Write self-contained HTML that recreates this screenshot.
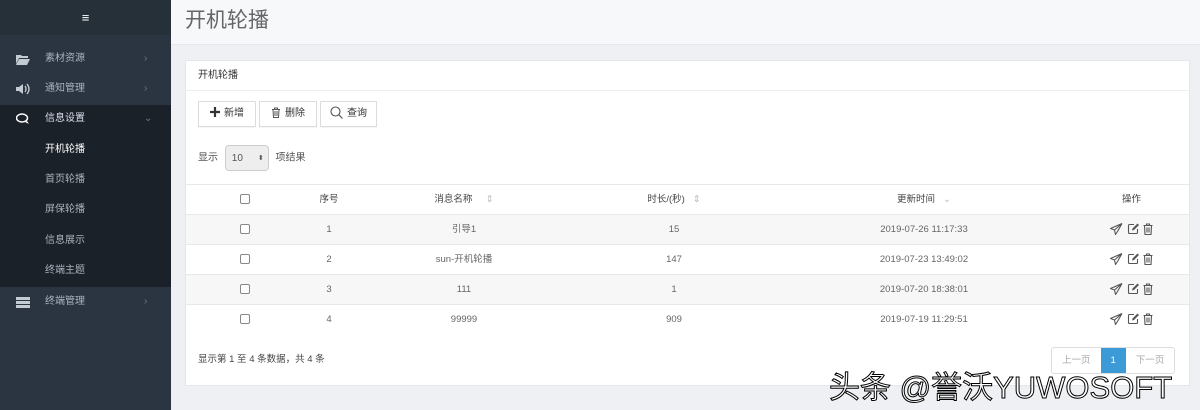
<!DOCTYPE html>
<html><head><meta charset="utf-8"><style>
*{box-sizing:border-box;margin:0;padding:0}
body{width:1200px;height:410px;overflow:hidden;background:#eef0f3;font-family:"Liberation Sans","Noto Sans CJK SC",sans-serif;position:relative}
.side{position:absolute;left:0;top:0;width:171px;height:410px;background:#2b3542}
.top{height:35px;background:#263039;color:#fff;text-align:center;line-height:35px;font-size:13px}
.mi{position:absolute;left:0;width:171px;height:30px;line-height:30px;font-size:10px;color:#aab2bc}
.mi .t{position:absolute;left:45px}
.mi .ic{position:absolute;left:16px;top:9px;width:14px;height:12px}
.mi .ar{position:absolute;left:144px;color:#6e7884}
.sub{position:absolute;left:0;top:105px;width:171px;height:182px;background:#1b2129}
.hdr{position:absolute;left:171px;top:0;width:1029px;height:45px;background:#f7f8f9;border-bottom:1px solid #e6e8eb;font-size:21px;color:#666;line-height:42px;padding-left:14px}
.panel{position:absolute;left:185px;top:60px;width:1005px;height:326px;background:#fff;border:1px solid #e4e6e9}
.ph{height:30px;line-height:30px;font-size:10px;color:#333;padding-left:12px;border-bottom:1px solid #eceef0}
.tb{height:46px;background:#fff;position:relative}
.btn{position:absolute;top:10px;height:26px;border:1px solid #dcdcdc;background:#fff;font-size:10px;color:#333;line-height:24px;text-align:center;box-shadow:0 1px 1px rgba(0,0,0,.05)}
.btn svg{vertical-align:middle;margin-right:4px;margin-top:-2px}
.sh{position:absolute;top:84px;left:12px;font-size:10px;color:#555;line-height:26px}
.sel{display:inline-block;width:44px;height:26px;border:1px solid #ccc;border-radius:4px;background:#eee;vertical-align:middle;margin:0 4px;padding-left:6px;position:relative}
table{position:absolute;top:123px;left:0;width:1003px;border-collapse:collapse;font-size:9.5px;color:#666}
td,th{height:30px;text-align:center;font-weight:normal;border-top:1px solid #e8e8e8;vertical-align:middle;line-height:12px}
th{color:#444}
tr:nth-child(even) td{background:#f7f7f7}
.cb{display:inline-block;width:10px;height:10px;border:1px solid #888;border-radius:2px;background:#fff;vertical-align:middle}
td svg{vertical-align:middle;margin:0 2px}
.foot{position:absolute;top:290px;left:12px;font-size:9.5px;color:#444}
.pg{position:absolute;top:286px;left:865px;height:27px;border:1px solid #ddd;display:flex;font-size:9.5px;color:#aaa;line-height:25px;border-radius:3px;overflow:hidden}
.wm{position:absolute;left:829px;top:362px;font-size:31px;color:#fff;-webkit-text-stroke:1px #000;font-family:"Liberation Sans","Noto Sans CJK SC",sans-serif}
</style></head><body>
<div class="side">
<div class="top">≡</div>
<div class="sub"></div>
<div class="mi" style="top:44px"><svg class="ic" viewBox="0 0 14 12"><path d="M0 2h5l1 1h6v2H3L0 11z M3 6h11l-3 6H0z" fill="#c4cad2"/></svg><span class="t">素材资源</span><span class="ar">›</span></div>
<div class="mi" style="top:74px"><svg class="ic" viewBox="0 0 14 12"><path d="M0 4h3l4-3v10L3 8H0z" fill="#c4cad2"/><path d="M9 3q2 3 0 6M11 1q4 5 0 10" stroke="#c4cad2" fill="none" stroke-width="1.3"/></svg><span class="t">通知管理</span><span class="ar">›</span></div>
<div class="mi" style="top:104px;color:#dde"><svg class="ic" viewBox="0 0 14 12"><ellipse cx="6" cy="5" rx="5.5" ry="4" stroke="#fff" fill="none" stroke-width="1.5"/><path d="M9 9l4 2-2-3" fill="#fff"/></svg><span class="t">信息设置</span><span class="ar">⌄</span></div>
<div class="mi" style="top:135px;color:#fff"><span class="t">开机轮播</span></div>
<div class="mi" style="top:165px"><span class="t">首页轮播</span></div>
<div class="mi" style="top:195px"><span class="t">屏保轮播</span></div>
<div class="mi" style="top:226px"><span class="t">信息展示</span></div>
<div class="mi" style="top:256px"><span class="t">终端主题</span></div>
<div class="mi" style="top:287px"><svg class="ic" viewBox="0 0 14 12"><rect x="0" y="1" width="14" height="3" fill="#c4cad2"/><rect x="0" y="5" width="14" height="3" fill="#c4cad2"/><rect x="0" y="9" width="14" height="3" fill="#c4cad2"/></svg><span class="t">终端管理</span><span class="ar">›</span></div>
</div>
<div class="hdr">开机轮播</div>
<div class="panel">
<div class="ph">开机轮播</div>
<div class="tb">
<div class="btn" style="left:12px;width:58px"><svg width="10" height="10" viewBox="0 0 10 10"><path d="M5 0v10M0 5h10" stroke="#333" stroke-width="2.2"/></svg>新增</div>
<div class="btn" style="left:73px;width:58px"><svg width="10" height="11" viewBox="0 0 10 11"><path d="M1 2.5h8M3.5 2.5V1h3v1.5M2 2.5l.5 8h5l.5-8M4 4v5M6 4v5" stroke="#555" fill="none" stroke-width="1"/></svg>删除</div>
<div class="btn" style="left:134px;width:57px"><svg width="13" height="13" viewBox="0 0 13 13"><circle cx="5.5" cy="5.5" r="4.5" stroke="#555" fill="none" stroke-width="1.1"/><path d="M9 9l3.5 3.5" stroke="#555" stroke-width="1.2"/></svg>查询</div>
</div>
<div class="sh">显示 <span class="sel">10 <span style="position:absolute;right:4px;font-size:7px">⬍</span></span> 项结果</div>
<table>
<tr><th style="width:118px"><span class="cb"></span></th><th style="width:50px">序号</th><th style="width:220px">消息名称 &nbsp;&nbsp;&nbsp;&nbsp;<span style="color:#bbb">⇕</span></th><th style="width:200px">时长/(秒) &nbsp;&nbsp;<span style="color:#bbb">⇕</span></th><th style="width:300px">更新时间 &nbsp;&nbsp;<span style="color:#bbb">⌄</span></th><th>操作</th></tr>
<tr><td><span class="cb"></span></td><td>1</td><td>引导1</td><td>15</td><td>2019-07-26 11:17:33</td><td class="ops"></td></tr>
<tr><td><span class="cb"></span></td><td>2</td><td>sun-开机轮播</td><td>147</td><td>2019-07-23 13:49:02</td><td class="ops"></td></tr>
<tr><td><span class="cb"></span></td><td>3</td><td>111</td><td>1</td><td>2019-07-20 18:38:01</td><td class="ops"></td></tr>
<tr><td><span class="cb"></span></td><td>4</td><td>99999</td><td>909</td><td>2019-07-19 11:29:51</td><td class="ops"></td></tr>
</table>
<div class="foot">显示第 1 至 4 条数据，共 4 条</div>
<div class="pg"><span style="padding:0 10px">上一页</span><span style="background:#3c9ad6;color:#fff;padding:0 10px">1</span><span style="padding:0 10px">下一页</span></div>
</div>
<div class="wm">头条 @誉沃YUWOSOFT</div>
<script>
var s='<svg width="13" height="12" viewBox="0 0 13 12"><path d="M12 .5L.5 5.5l4 1.5 1 4.5 2-3M12 .5L4.5 7M12 .5l-4.5 8" stroke="#555" fill="none" stroke-width="1.1" stroke-linejoin="round"/></svg><svg width="12" height="12" viewBox="0 0 12 12"><path d="M7 1.5H2.5a1 1 0 0 0-1 1v7a1 1 0 0 0 1 1h7a1 1 0 0 0 1-1V6" stroke="#555" fill="none" stroke-width="1.1"/><path d="M5 7.5l.5-2 5-5 1.5 1.5-5 5z" fill="#555"/></svg><svg width="10" height="12" viewBox="0 0 10 12"><path d="M.5 2.5h9M3.5 2.5V1h3v1.5M1.5 2.5l.5 9h6l.5-9M4 4.5v5M6 4.5v5" stroke="#555" fill="none" stroke-width="1.1"/></svg>';
document.querySelectorAll('.ops').forEach(function(e){e.innerHTML=s});
</script>
</body></html>
